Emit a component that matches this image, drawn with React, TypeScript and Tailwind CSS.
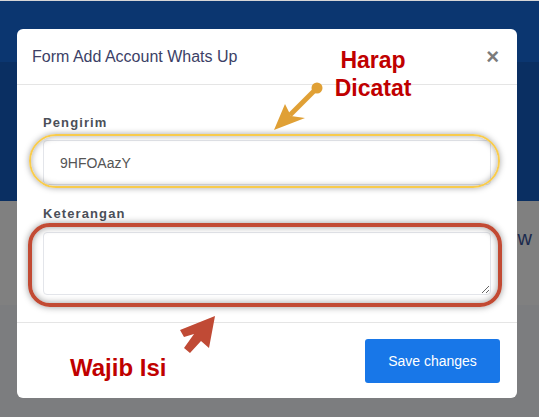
import React from 'react';

const font = { fontFamily: '"Liberation Sans", Arial, sans-serif' };

export default function App() {
  return (
    <div className="relative w-[539px] h-[417px] overflow-hidden bg-[#7c7d7f]" style={font}>
      {/* Page behind the backdrop */}
      <div className="h-px bg-[#d6d6d6]" />
      <div className="h-[61px] bg-[#0b3670]" />
      <div className="h-[139px] bg-[#0a2f62]" />
      <div className="h-[104px] bg-[#808080] flex justify-end pt-[27px] pr-[7px]">
        <span className="text-[20px] leading-none text-[#1b2a4e]">w</span>
      </div>

      {/* Modal */}
      <div className="absolute left-[17px] top-[29px] w-[500px] bg-white rounded-[6px]">
        <div className="h-[56px] flex items-center justify-between pl-[15px] pr-[18px] border-b border-[#e5e5e5]">
          <h4 className="text-[16px] text-[#3c3f66] pt-[1px]">Form Add Account Whats Up</h4>
          <button className="text-[22px] font-bold leading-none text-[#7b7b7b] pt-[1px]">×</button>
        </div>

        <div className="px-[26px] pt-[29px] pb-[27px]">
          <label className="block text-[13px] leading-[18px] font-bold tracking-[1.1px] text-[#4b4f58]">Pengirim</label>
          <input
            readOnly
            value="9HFOAazY"
            className="mt-[8px] block w-full h-[45px] px-[16px] text-[14px] text-[#555] border border-[#e3e5ea] rounded-[4px] outline-none"
          />
          <label className="block mt-[20px] text-[13px] leading-[18px] font-bold tracking-[1.1px] text-[#4b4f58]">Keterangan</label>
          <textarea className="mt-[9px] block w-full h-[63px] px-[16px] text-[14px] border border-[#e3e5ea] rounded-[4px] outline-none" />
        </div>

        <div className="flex justify-end border-t border-[#e5e5e5] pt-[16px] pb-[15px] pr-[17px]">
          <button className="h-[44px] w-[135px] rounded-[3px] bg-[#1877e8] text-white text-[14px]">Save changes</button>
        </div>
      </div>

      {/* Annotation outlines */}
      <div className="absolute left-[29px] top-[134px] w-[471px] h-[54px] rounded-full border-2 border-[#f8cb4c] shadow-[0_0_6px_rgba(0,0,0,0.35),inset_0_0_6px_rgba(0,0,0,0.35)]" />
      <div className="absolute left-[28px] top-[223px] w-[474px] h-[84px] rounded-[22px] border-4 border-[#c24a33] shadow-[0_0_7px_rgba(0,0,0,0.4),inset_0_0_7px_rgba(0,0,0,0.4)]" />

      {/* Annotation texts */}
      <div className="absolute left-[322px] top-[46px] w-[102px] text-center text-[23px] leading-[28px] font-bold text-[#c00000]">
        Harap
        <br />
        Dicatat
      </div>
      <div className="absolute left-[70px] top-[354px] text-[24px] leading-[28px] font-bold text-[#c00000]">Wajib Isi</div>

      {/* Annotation arrows */}
      <svg className="absolute left-0 top-0 pointer-events-none" width="539" height="417" viewBox="0 0 539 417">
        <circle cx="317" cy="88" r="5.5" fill="#e0a035" />
        <line x1="317" y1="88" x2="290" y2="115" stroke="#e0a035" strokeWidth="5" />
        <polygon points="274,130 285,104 291,116 305,118" fill="#e0a035" />
        <polygon
          points="215,316 180,330 184,337 194,334 184,348 190,353 201,341 209,348"
          fill="#c04a35"
        />
      </svg>
    </div>
  );
}
